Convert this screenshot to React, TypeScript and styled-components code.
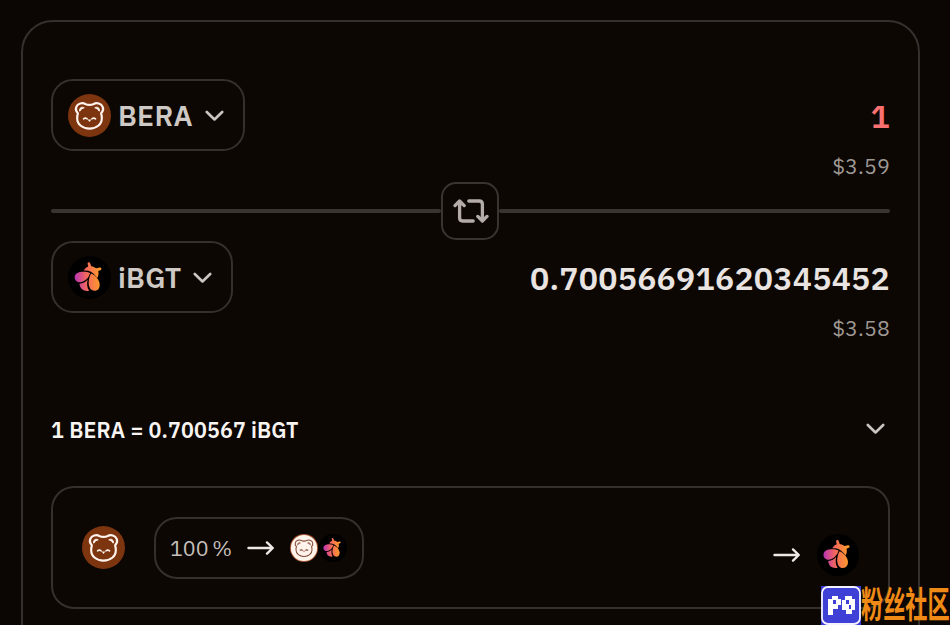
import React from "react";
import styled, { createGlobalStyle } from "styled-components";

const Global = createGlobalStyle`
  * { box-sizing: border-box; }
  html, body { margin: 0; background: #0b0603; }
  body { width: 950px; height: 625px; overflow: hidden; }
`;

const line = "#393430";
const softLine = "#35302d";

const Page = styled.main`
  position: relative;
  width: 950px;
  height: 625px;
  padding: 20px 30px 0 21px;
  overflow: hidden;
  background: #0b0603;
  color: #e7e2df;
  font-family: "IBM Plex Sans", "Noto Sans", sans-serif;
`;

const Card = styled.section`
  height: 700px;
  padding: 57px 28px 0;
  border: 2px solid ${softLine};
  border-radius: 32px;
  background: #0c0702;
`;

const TokenPanel = styled.div`
  display: flex;
  justify-content: space-between;
  height: 103px;
`;

const TokenButton = styled.button<{ $width: number }>`
  display: flex;
  align-items: center;
  width: ${(p) => p.$width}px;
  height: 72px;
  padding: 1px 0 0 15px;
  border: 2px solid ${softLine};
  border-radius: 22px;
  background: transparent;
  color: #cfc9c5;
  font: inherit;
`;

const Symbol = styled.span<{ $width: number }>`
  width: ${(p) => p.$width}px;
  margin: 0 14px 0 7px;
  padding-top: 1px;
  font-size: 28.4px;
  font-weight: 600;
  line-height: 36px;
  letter-spacing: 0.3px;
  text-align: left;
  white-space: nowrap;
`;

const Amounts = styled.div`
  display: flex;
  flex-direction: column;
  align-items: flex-end;
  padding-top: 16px;
`;

const Amount = styled.div<{ $alert?: boolean }>`
  font-size: 32px;
  font-weight: 600;
  line-height: 42px;
  letter-spacing: 0.25px;
  color: ${(p) => (p.$alert ? "#f8706f" : "#e9e4e1")};
`;

const Fiat = styled.div`
  margin-top: 15px;
  font-size: 21.4px;
  line-height: 28px;
  letter-spacing: 0.15px;
  color: #9e9894;
`;

const Divider = styled.div`
  display: flex;
  align-items: center;
  height: 58px;
  margin-bottom: 1px;
`;

const Rule = styled.span<{ $width: number }>`
  width: ${(p) => p.$width}px;
  height: 4px;
  background: ${line};
  border-radius: 2px;
`;

const SwapButton = styled.button`
  display: grid;
  place-items: center;
  width: 58px;
  height: 58px;
  padding: 0 0 0 1px;
  border: 2px solid ${line};
  border-radius: 15px;
  background: transparent;
`;

const RateRow = styled.div`
  display: flex;
  align-items: center;
  justify-content: space-between;
  height: 32px;
  margin: 69px 5px 0 0;
`;

const Rate = styled.span`
  padding-top: 2px;
  color: #f7f4f2;
  font-size: 21.4px;
  font-weight: 600;
  letter-spacing: 0.13px;
  white-space: nowrap;
`;

const Route = styled.div`
  display: flex;
  align-items: center;
  height: 123px;
  margin-top: 41px;
  padding: 0 29px;
  border: 2px solid ${softLine};
  border-radius: 23px;
`;

const Hop = styled.div`
  display: flex;
  align-items: center;
  width: 210px;
  height: 62px;
  margin-left: 29px;
  padding-left: 14px;
  border: 2px solid ${softLine};
  border-radius: 23px;
`;

const Share = styled.span`
  width: 77px;
  color: #c5bfbb;
  font-size: 21.4px;
  word-spacing: -1.4px;
  white-space: nowrap;
`;

const HopTokens = styled.span`
  display: flex;
  margin-left: 15px;
  gap: 1px;
`;

const Destination = styled.div`
  display: flex;
  align-items: center;
  gap: 16px;
  margin: 14px 0 0 auto;
`;

const Icon = styled.svg`
  display: block;
  flex: none;
`;

const Watermark = styled.div`
  position: absolute;
  left: 821px;
  top: 586px;
  display: flex;
  width: 129px;
  height: 39px;
`;

const WatermarkText = styled.span`
  flex: none;
  margin-top: 6px;
  color: #f08a16;
  font-family: "Noto Sans CJK SC", sans-serif;
  font-size: 22.2px;
  font-weight: 700;
  line-height: 24px;
  white-space: nowrap;
  transform: scaleY(1.64);
`;

const Bear = ({ size, light = false }: { size: number; light?: boolean }) => (
  <Icon width={size} height={size} viewBox="0 0 44 44" fill="none">
    <circle cx="22" cy="22" r="22" fill={light ? "#a85732" : "#7d3510"} />
    {light && <circle cx="22" cy="22" r="20.6" fill="#fff4ec" />}
    <g stroke={light ? "#7d4431" : "#fff4ed"} strokeWidth={light ? 1.6 : 2.2} strokeLinecap="round" strokeLinejoin="round">
      <path d="M22 11.2c1.8 0 3-.3 4.3-1 3-1.8 7.8-.4 9.2 3 .9 2.4.2 4.8-1.6 6.6.5 1.7.7 3.3.7 4.9 0 6.4-5.6 10.7-12.6 10.7S9.4 31.1 9.4 24.7c0-1.6.2-3.2.7-4.9-1.8-1.8-2.5-4.2-1.6-6.6 1.4-3.4 6.2-4.8 9.2-3 1.3.7 2.5 1 4.3 1Z" />
      <path d="m16 25.4 1.7-.8 1.8.8M24.6 25.4l1.7-.8 1.8.8" strokeWidth="1.7" />
    </g>
    <path
      d="M12 17.6c-.9-3.3 2.1-5 4.6-3.5-1.9.5-3.4 1.7-4.6 3.5ZM32 17.6c.9-3.3-2.1-5-4.6-3.5 1.9.5 3.4 1.7 4.6 3.5Z"
      fill={light ? "#a2705e" : "#fff4ed"}
      stroke={light ? "#a2705e" : "#fff4ed"}
      strokeWidth="1"
      strokeLinejoin="round"
    />
    <path d="M20.1 26.2h3.8L22 28.7Z" fill={light ? "#ca6b5b" : "#fff4ed"} />
  </Icon>
);

const Berry = ({ size, id }: { size: number; id: string }) => (
  <Icon width={size} height={size} viewBox="0 0 42 42">
    <defs>
      <linearGradient id={id} x1="7" y1="21" x2="31" y2="20" gradientUnits="userSpaceOnUse">
        <stop stopColor="#b936b2" />
        <stop offset=".45" stopColor="#f3665e" />
        <stop offset="1" stopColor="#ff9a2b" />
      </linearGradient>
    </defs>
    <circle cx="21" cy="21" r="21" fill="#000" />
    <g fill={`url(#${id})`}>
      <path d="M15.4 14.4c.8-1.9 2.2-3.4 4.3-4.1l-.6-2.7c-.2-1.7 2.1-2.1 2.6-.6l1 2.9c1.9.3 3.5 1 4.8 2.1l3.4-.7c1.8-.3 2.4 1.9.8 2.5l-2.2.9c.7 2.3.3 4.8-1 6.9-1.5-2.5-3.7-4.7-6.2-6.1-2.1-1.1-4.4-1.5-6.9-1.1Z" />
      <path d="M12 15.6c3.6-.6 7-.2 9.6 1-1.3 4.3-3.5 7-7.4 8.6-4 1.5-7.6-.8-7.7-4.3-.1-2.7 2.2-4.9 5.5-5.3Z" />
      <path d="M11.2 27.1c3.6-.4 6-1.8 7.9-4-.8 4-.6 7.5 1.5 10.8-5.2.9-9-1.7-9.4-6.8Z" />
      <path d="M22.6 17.2c4.4 1.9 7.8 5.8 8.3 10.1.4 3.9-1.7 6.7-5 6.7-3.7 0-5.7-3.4-5.7-7.8 0-3.3.9-6.6 2.4-9Z" />
    </g>
  </Icon>
);

const Chevron = () => (
  <Icon width="19" height="12" viewBox="0 0 19 12" fill="none">
    <path d="m1.8 2 7.7 7.5L17.2 2" stroke="#cbc5c1" strokeWidth="2.6" strokeLinecap="round" strokeLinejoin="round" />
  </Icon>
);

const Arrow = () => (
  <Icon width="28" height="16" viewBox="0 0 28 16" fill="none">
    <path d="M1.5 8h24M20 2.4 25.8 8 20 13.6" stroke="#eee9e6" strokeWidth="2.4" strokeLinecap="round" strokeLinejoin="round" />
  </Icon>
);

const SwapIcon = () => (
  <Icon width="36" height="24" viewBox="0 0 36 24" fill="none">
    <path
      d="M2 6.6 6.6 2l4.6 4.6M6.6 2.4v16.4q0 3.2 3.2 3.2h10.4M15.8 2h10.4q3.2 0 3.2 3.2v16.4M24.8 17.4l4.6 4.6 4.6-4.6"
      stroke="#b3aca8"
      strokeWidth="3.3"
      strokeLinecap="round"
      strokeLinejoin="round"
    />
  </Icon>
);

const WatermarkLogo = () => (
  <Icon width="40" height="39" viewBox="0 0 40 39">
    <path d="M0 0h40v39H0Z" fill="#383bd2" />
    <rect x="1" y="1" width="38" height="37" rx="6" fill="#3e40d6" stroke="#f4f2ff" strokeWidth="1.8" />
    <path
      d="M7 13h4v-3h6v3h3v6h-3v4h-5v6H7ZM12 14v4h3v-4ZM21 14h3v-4h7v3h3v11h-3v4h-6v-4h-4ZM25 14v4h3v-4ZM28 19v4h2v-4Z"
      fill="#fff"
      fillRule="evenodd"
    />
  </Icon>
);

export default function App() {
  return (
    <>
      <Global />
      <Page>
        <Card>
          <TokenPanel>
            <TokenButton $width={194}>
              <Bear size={43} />
              <Symbol $width={73}>BERA</Symbol>
              <Chevron />
            </TokenButton>
            <Amounts>
              <Amount $alert>1</Amount>
              <Fiat>$3.59</Fiat>
            </Amounts>
          </TokenPanel>
          <Divider>
            <Rule $width={390} />
            <SwapButton><SwapIcon /></SwapButton>
            <Rule $width={391} />
          </Divider>
          <TokenPanel>
            <TokenButton $width={182}>
              <Berry size={43} id="berry-token" />
              <Symbol $width={61}>iBGT</Symbol>
              <Chevron />
            </TokenButton>
            <Amounts>
              <Amount>0.70056691620345452</Amount>
              <Fiat>$3.58</Fiat>
            </Amounts>
          </TokenPanel>
          <RateRow>
            <Rate>1 BERA = 0.700567 iBGT</Rate>
            <Chevron />
          </RateRow>
          <Route>
            <Bear size={43} />
            <Hop>
              <Share>100 %</Share>
              <Arrow />
              <HopTokens>
                <Bear size={28} light />
                <Berry size={28} id="berry-hop" />
              </HopTokens>
            </Hop>
            <Destination>
              <Arrow />
              <Berry size={42} id="berry-destination" />
            </Destination>
          </Route>
        </Card>
        <Watermark>
          <WatermarkLogo />
          <WatermarkText>粉丝社区</WatermarkText>
        </Watermark>
      </Page>
    </>
  );
}
